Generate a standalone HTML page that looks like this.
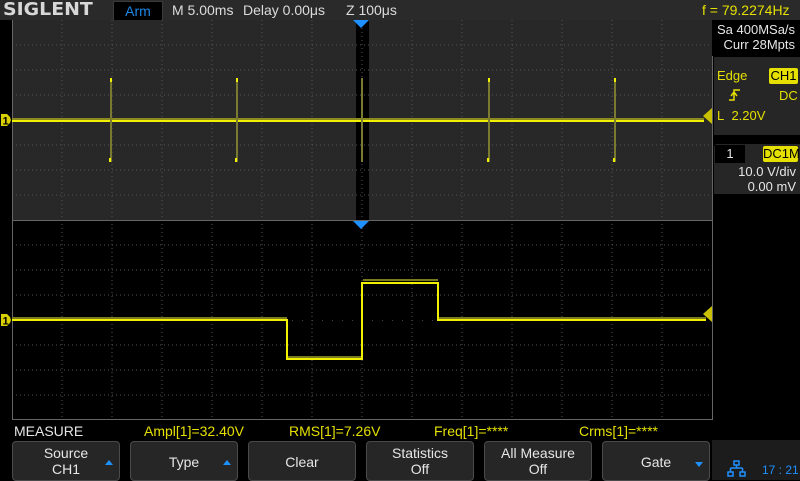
<!DOCTYPE html>
<html><head><meta charset="utf-8"><style>
body{margin:0;width:800px;height:480px;background:#000;overflow:hidden;font-family:"Liberation Sans",sans-serif;position:relative}
.a{position:absolute;white-space:nowrap}
.btn{position:absolute;top:441px;width:106px;height:38px;background:#262626;border:1px solid #4a4a4a;border-radius:4px;color:#e6e6e6;font-size:14px;text-align:center;line-height:16px}
.arr{position:absolute;right:6px;width:0;height:0;border-left:4px solid transparent;border-right:4px solid transparent}
</style></head><body>
<div class="a" style="left:0;top:0;width:800px;height:20px;background:#2a2a2a"></div>
<div class="a" style="left:3px;top:0px;font-size:18px;font-weight:bold;color:#d8d8d8;font-family:'DejaVu Sans',sans-serif;line-height:20px;transform:scaleX(1.05);transform-origin:left">SIGLENT</div>
<div class="a" style="left:113px;top:1px;width:48px;height:18px;background:#000;border:1px solid #3a3a3a;color:#1e88e5;font-size:14px;line-height:18px;text-align:center">Arm</div>
<div class="a" style="left:172px;top:1px;color:#dcdcdc;font-size:14px;line-height:18px">M 5.00ms</div>
<div class="a" style="left:243px;top:1px;color:#dcdcdc;font-size:14px;line-height:18px">Delay 0.00μs</div>
<div class="a" style="left:346px;top:1px;color:#dcdcdc;font-size:14px;line-height:18px">Z 100μs</div>
<div class="a" style="left:702px;top:1px;color:#e5e000;font-size:14px;line-height:18px">f = 79.2274Hz</div>
<svg class="a" style="left:0;top:0" width="800" height="440">
<rect x="12" y="20" width="700" height="200" fill="#282828"/>
<rect x="356" y="20" width="13" height="200" fill="#000"/>
<rect x="12" y="220" width="700" height="200" fill="#000"/>
<g stroke="#555" stroke-width="1" stroke-dasharray="1,3">
<path d="M62 20V420M112 20V420M162 20V420M212 20V420M262 20V420M312 20V420M362 20V420M412 20V420M462 20V420M512 20V420M562 20V420M612 20V420M662 20V420"/>
<path d="M12 45H712M12 70H712M12 95H712M12 145H712M12 170H712M12 195H712M12 245H712M12 270H712M12 295H712M12 345H712M12 370H712M12 395H712"/>
</g>
<path d="M12 120.5H712M12 320.5H712" stroke="#444" stroke-dasharray="1,9"/>
<line x1="12" y1="220.5" x2="712" y2="220.5" stroke="#666"/>
<line x1="12.5" y1="20" x2="12.5" y2="420" stroke="#666"/>
<line x1="712.5" y1="20" x2="712.5" y2="420" stroke="#666"/>
<line x1="12" y1="419.5" x2="712" y2="419.5" stroke="#666"/>
<path d="M353 20h16l-8 8z" fill="#1e90ff"/>
<path d="M353 221h16l-8 8z" fill="#1e90ff"/>
<rect x="12" y="118" width="692" height="2" fill="#8a8a20"/>
<rect x="12" y="120" width="692" height="2" fill="#f0f000"/>
<g stroke="#7a7a30" stroke-width="2">
<path d="M111 78V162M237 78V162M362 78V162M489 78V162M615 78V162"/>
</g>
<g fill="#f0f000"><rect x="110" y="78" width="2" height="4"/><rect x="109" y="158" width="2" height="4"/><rect x="236" y="78" width="2" height="4"/><rect x="235" y="158" width="2" height="4"/><rect x="488" y="78" width="2" height="4"/><rect x="487" y="158" width="2" height="4"/><rect x="614" y="78" width="2" height="4"/><rect x="613" y="158" width="2" height="4"/></g>
<path d="M12 318H287M287 357H362M363 280H438M438 318H706" stroke="#7a7a20" stroke-width="2"/>
<path d="M12 320H287V359H362V283H438V320H706" stroke="#f0f000" stroke-width="2" fill="none"/>
<path d="M1 114h6l3 3l1 3l-1 3l-3 3h-6z" fill="#d8d000"/><text x="2.5" y="124.5" font-size="11" font-family="Liberation Sans" fill="#000" font-weight="bold">1</text>
<path d="M1 314h6l3 3l1 3l-1 3l-3 3h-6z" fill="#d8d000"/><text x="2.5" y="324.5" font-size="11" font-family="Liberation Sans" fill="#000" font-weight="bold">1</text>
<path d="M712 108v16l-9-8z" fill="#c8c000"/>
<path d="M712 306v16l-9-8z" fill="#c8c000"/>
</svg>
<div class="a" style="left:712px;top:20px;width:88px;height:36px;background:#000"></div>
<div class="a" style="left:717px;top:22px;color:#e6e6e6;font-size:13px;line-height:15px;text-align:right;width:78px">Sa 400MSa/s<br>Curr 28Mpts</div>
<div class="a" style="left:714px;top:57px;width:86px;height:78px;background:#262626"></div>
<div class="a" style="left:717px;top:68px;color:#e5e000;font-size:13px">Edge</div>
<div class="a" style="left:769px;top:68px;width:29px;height:16px;background:#e5e000;color:#000;font-size:13px;line-height:16px;text-align:center;border-radius:2px">CH1</div>
<svg class="a" style="left:728px;top:88px" width="14" height="14"><path d="M1 12h5V2h6M3 8l3-4 3 4" stroke="#e5e000" fill="none" stroke-width="1.5"/></svg>
<div class="a" style="left:779px;top:88px;color:#e5e000;font-size:13px">DC</div>
<div class="a" style="left:717px;top:108px;color:#e5e000;font-size:13px">L&nbsp; 2.20V</div>
<div class="a" style="left:714px;top:144px;width:86px;height:50px;background:#262626;border-radius:3px 0 0 0"></div>
<div class="a" style="left:715px;top:145px;width:30px;height:18px;background:#000;color:#e6e6e6;font-size:13px;line-height:18px;text-align:center">1</div>
<div class="a" style="left:763px;top:146px;width:35px;height:16px;background:#e5e000;color:#000;font-size:13px;line-height:16px;text-align:center;border-radius:2px">DC1M</div>
<div class="a" style="left:714px;top:164px;width:82px;text-align:right;color:#e6e6e6;font-size:13px;line-height:15px">10.0 V/div<br>0.00 mV</div>
<div class="a" style="left:14px;top:423px;color:#e6e6e6;font-size:14px;line-height:16px">MEASURE</div>
<div class="a" style="left:144px;top:423px;color:#e5e000;font-size:14px;line-height:16px">Ampl[1]=32.40V</div>
<div class="a" style="left:289px;top:423px;color:#e5e000;font-size:14px;line-height:16px">RMS[1]=7.26V</div>
<div class="a" style="left:434px;top:423px;color:#e5e000;font-size:14px;line-height:16px">Freq[1]=****</div>
<div class="a" style="left:579px;top:423px;color:#e5e000;font-size:14px;line-height:16px">Crms[1]=****</div>
<div class="btn" style="left:12px"><div style="margin-top:3px">Source<br>CH1</div><div class="arr" style="top:18px;border-bottom:5px solid #1e90ff"></div></div>
<div class="btn" style="left:130px"><div style="margin-top:12px">Type</div><div class="arr" style="top:18px;border-bottom:5px solid #1e90ff"></div></div>
<div class="btn" style="left:248px"><div style="margin-top:12px">Clear</div></div>
<div class="btn" style="left:366px"><div style="margin-top:3px">Statistics<br>Off</div></div>
<div class="btn" style="left:484px"><div style="margin-top:3px">All Measure<br>Off</div></div>
<div class="btn" style="left:602px"><div style="margin-top:12px">Gate</div><div class="arr" style="top:20px;border-top:5px solid #1e90ff"></div></div>
<div class="a" style="left:712px;top:440px;width:88px;height:40px;background:#1c1c1c"></div>
<svg class="a" style="left:727px;top:460px" width="20" height="18"><g fill="none" stroke="#1e90ff" stroke-width="1.5"><rect x="7" y="1" width="5" height="4"/><rect x="1" y="12" width="5" height="4"/><rect x="13" y="12" width="5" height="4"/><path d="M9.5 5v3M3.5 8h12M3.5 8v4M15.5 8v4"/></g></svg>
<div class="a" style="left:762px;top:463px;color:#1e90ff;font-size:12px">17 : 21</div>
</body></html>
